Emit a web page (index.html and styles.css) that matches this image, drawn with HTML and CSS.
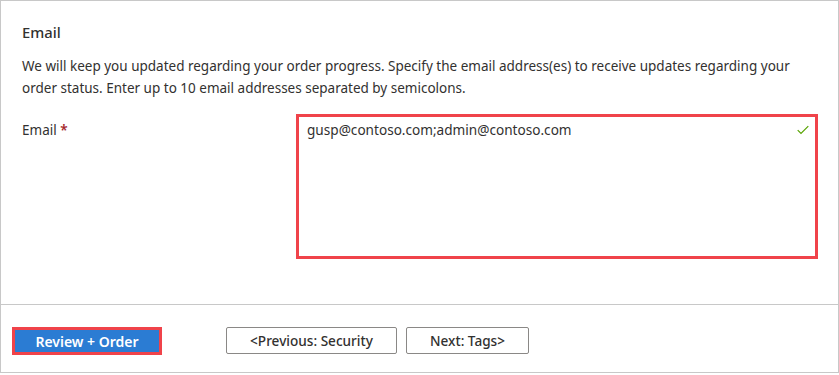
FILE: index.html
```html
<!DOCTYPE html>
<html lang="en">
<head>
<meta charset="utf-8">
<title>Email</title>
<link rel="stylesheet" href="styles.css">
</head>
<body>
<div class="frame">
  <section class="content">
    <h2 class="title">Email</h2>
    <p class="desc">We will keep you updated regarding your order progress. Specify the email address(es) to receive updates regarding your order status. Enter up to 10 email addresses separated by semicolons.</p>
    <div class="field">
      <label class="label" for="email">Email <span class="req">*</span></label>
      <div class="input-wrap">
        <div class="input" id="email">gusp@contoso.com;admin@contoso.com</div>
        <svg class="check" width="12" height="10" viewBox="0 0 12 10" aria-hidden="true"><path d="M0.7 5.2 L4 8.5 L11.3 1.2" fill="none" stroke="#57a300" stroke-width="1.2"/></svg>
      </div>
    </div>
  </section>
  <footer class="footer">
    <button class="btn-primary">Review + Order</button>
    <button class="btn btn-prev">&lt;Previous: Security</button>
    <button class="btn btn-next">Next: Tags&gt;</button>
  </footer>
</div>
</body>
</html>
```

FILE: styles.css
```css
html, body {
  margin: 0;
  padding: 0;
  background: #ffffff;
}
body {
  font-family: "Segoe UI", "Noto Sans", "Open Sans", sans-serif;
  color: #323130;
}
.frame {
  box-sizing: border-box;
  width: 839px;
  height: 373px;
  border: 1px solid #c8c8c8;
  display: flex;
  flex-direction: column;
}
.content {
  box-sizing: border-box;
  height: 304px;
  border-bottom: 1px solid #c8c8c8;
  padding: 20px 0 0 21px;
}
.title {
  margin: 0;
  font-size: 14.8px;
  font-weight: 500;
  line-height: 22px;
}
.desc {
  margin: 12px 0 0;
  width: 775px;
  font-size: 13.5px;
  line-height: 22px;
}
.field {
  margin-top: 15px;
  display: grid;
  grid-template-columns: 274px 522px;
}
.label {
  padding-top: 5px;
  font-size: 13.5px;
  line-height: 22px;
}
.req {
  color: #a4262c;
  font-weight: 600;
}
.input-wrap {
  position: relative;
}
.input {
  box-sizing: border-box;
  height: 145px;
  border: 3px solid #f0434a;
  padding: 3px 8px;
  font-size: 13.6px;
  line-height: 20px;
}
.check {
  position: absolute;
  right: 9px;
  top: 11px;
}
.footer {
  flex: 1;
  display: flex;
  align-items: flex-start;
  padding: 22px 0 0 11px;
}
button {
  font-family: inherit;
  cursor: pointer;
}
.btn-primary {
  box-sizing: border-box;
  width: 150px;
  height: 28px;
  border: 3px solid #f0434a;
  background: #2b7cd3;
  color: #ffffff;
  font-size: 14px;
  font-weight: 600;
  padding: 0;
}
.btn {
  box-sizing: border-box;
  height: 27px;
  border: 1px solid #8a8886;
  border-radius: 2px;
  background: #ffffff;
  color: #323130;
  font-size: 13.6px;
  font-weight: 500;
  padding: 0;
}
.btn-prev {
  width: 171px;
  margin-left: 64px;
}
.btn-next {
  width: 123px;
  margin-left: 9px;
}
```
